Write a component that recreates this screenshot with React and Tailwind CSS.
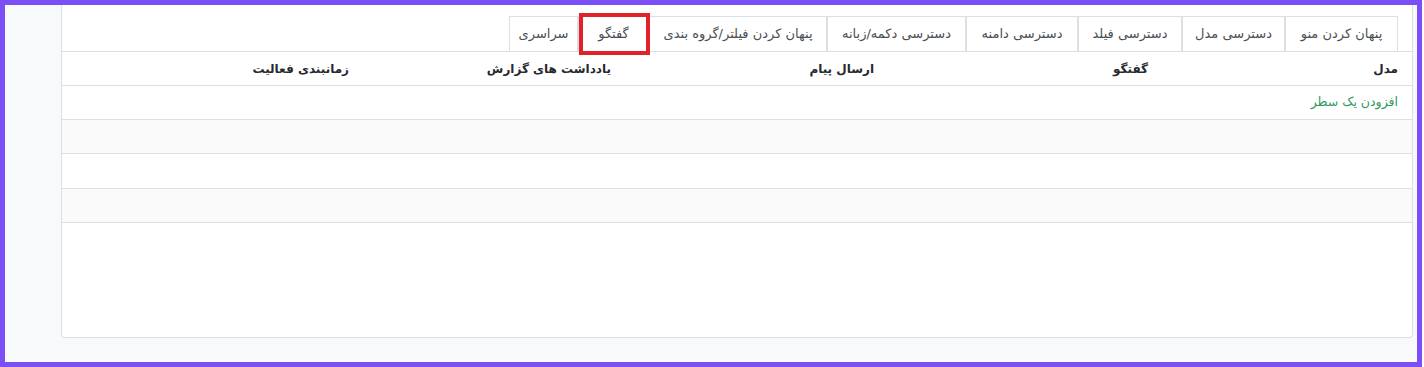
const tabs = [
  { label: 'پنهان کردن منو', w: 'w-[113px]' },
  { label: 'دسترسی مدل', w: 'w-[103px]' },
  { label: 'دسترسی فیلد', w: 'w-[104px]' },
  { label: 'دسترسی دامنه', w: 'w-[112px]' },
  { label: 'دسترسی دکمه/زبانه', w: 'w-[139px]' },
  { label: 'پنهان کردن فیلتر/گروه بندی', w: 'w-[178px]' },
  { label: 'گفتگو', w: 'w-[71px]', active: true },
  { label: 'سراسری', w: 'w-[69px]' },
];

const columns = ['مدل', 'گفتگو', 'ارسال پیام', 'یادداشت های گزارش', 'زمانبندی فعالیت'];

const Tab = ({ label, w, active }) => (
  <div className={`relative ${w} h-[35px] flex items-center justify-center pb-[1px] border border-b-0 border-[#dcdfe3] bg-white text-[13px] text-[#4a4f55]`}>
    {label}
    {active && (
      <div className="absolute -top-[4px] -bottom-[4px] right-[-2px] left-0 border-[4px] border-[#e0232b]" />
    )}
  </div>
);

export default function App() {
  return (
    <div className="w-[1424px] h-[367px] bg-[#fbfaff] font-['DejaVu_Sans',sans-serif]">
      <div className="w-[1422px] h-[367px] border-[5px] border-[#7b4ff6] bg-[#f8f9fb] pl-[56px] pr-[4px] pb-[24px]">
        <div dir="rtl" className="h-full bg-white border border-t-0 border-[#dcdfe3] rounded-b-[4px] flex flex-col">
          <div className="pt-[11px] px-[14px] border-b border-[#dcdfe3] flex">
            {tabs.map((t) => (
              <Tab key={t.label} {...t} />
            ))}
          </div>

          <div className="grid grid-cols-[250px_274px_263px_262px_1fr] text-[12px]">
            {columns.map((c) => (
              <div key={c} className="h-[34px] flex items-center pr-[14px] font-bold text-[#26292d] border-b border-[#dcdfe3]">
                {c}
              </div>
            ))}
          </div>

          <div className="h-[34px] flex items-center pr-[14px] text-[12.5px] text-[#2f9a5a] border-b border-[#dcdfe3]">
            افزودن یک سطر
          </div>
          <div className="h-[34px] bg-[#fafafa] border-b border-[#dcdfe3]" />
          <div className="h-[35px] bg-white border-b border-[#dcdfe3]" />
          <div className="h-[34px] bg-[#fafafa] border-b border-[#dcdfe3]" />
          <div className="flex-1 bg-white rounded-b-[4px]" />
        </div>
      </div>
    </div>
  );
}
